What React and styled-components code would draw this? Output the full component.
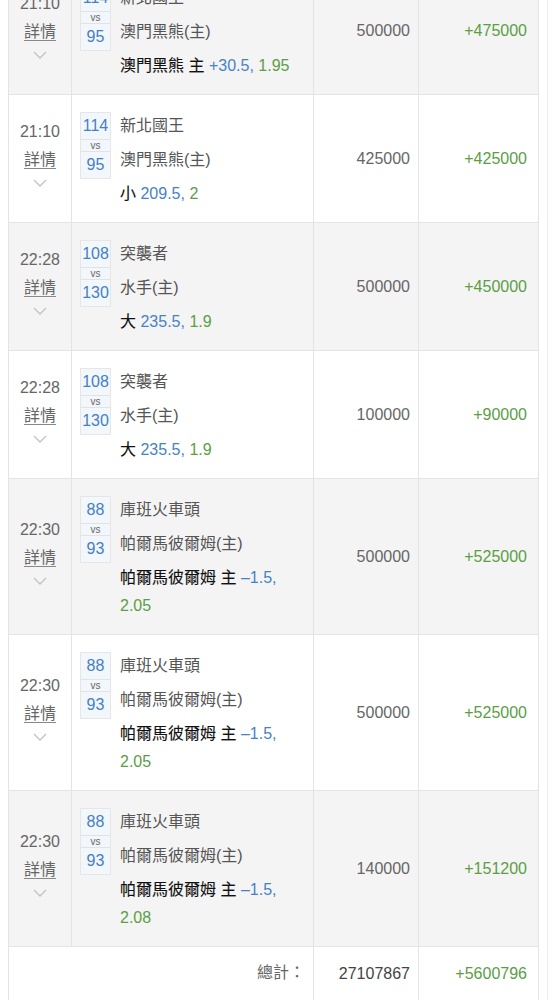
import React from "react";
import styled, { createGlobalStyle } from "styled-components";

const GlobalStyle = createGlobalStyle`
  html, body {
    margin: 0;
    padding: 0;
    background: #fff;
  }
  body {
    font-family: "Liberation Sans", Arial, "Noto Sans CJK TC", sans-serif;
    overflow: hidden;
  }
`;

const Page = styled.div`
  box-sizing: border-box;
  width: 548px;
  height: 100vh;
  padding-left: 8px;
  border-right: 1px solid #ececec;
  overflow: hidden;
`;

const Table = styled.table`
  width: 530px;
  margin-top: -34px;
  border-collapse: collapse;
  table-layout: fixed;
  font-size: 16px;
`;

const Row = styled.tr`
  background: ${(p) => (p.$shade ? "#f4f4f4" : "#ffffff")};
`;

const Cell = styled.td`
  border: 1px solid #e4e4e4;
  padding: 0;
  vertical-align: middle;
`;

const TimeCell = styled(Cell)`
  text-align: center;
`;

const TimeStack = styled.div`
  display: flex;
  flex-direction: column;
  align-items: center;
  padding-bottom: 8px;
`;

const Time = styled.div`
  line-height: 28px;
  color: #666;
`;

const Detail = styled.a`
  line-height: 28px;
  color: #666;
  text-decoration: underline;
  text-underline-offset: 3px;
  text-decoration-color: #888;
`;

const ChevronBox = styled.div`
  height: 18px;
  display: flex;
  align-items: center;
  justify-content: center;
`;

const MatchCell = styled(Cell)`
  padding: 14px 4px 14px 8px;
  vertical-align: top;
`;

const MatchBody = styled.div`
  display: flex;
  align-items: flex-start;
  gap: 9px;
`;

const ScoreBox = styled.div`
  box-sizing: border-box;
  flex: none;
  width: 31px;
  margin-top: 3px;
  border: 1px solid #e6e6e6;
  display: flex;
  flex-direction: column;
  text-align: center;
  background: #f2f7fc;
`;

const ScoreNum = styled.div`
  height: 26px;
  line-height: 26px;
  font-size: 16px;
  color: #4580c2;
`;

const Vs = styled.div`
  height: 11px;
  line-height: 11px;
  font-size: 10px;
  color: #666;
  border-top: 1px solid #e3e3e3;
  border-bottom: 1px solid #e3e3e3;
`;

const Info = styled.div`
  flex: 1;
  min-width: 0;
`;

const Team = styled.div`
  line-height: 34px;
  color: #555;
  white-space: nowrap;
`;

const Bet = styled.div`
  margin-top: 3px;
  line-height: 28px;
  color: #111;
`;

const Subject = styled.span`
  color: #111;
  -webkit-text-stroke: 0.12px #111;
`;

const Handicap = styled.span`
  color: #4683c4;
`;

const Odds = styled.span`
  color: #5b9e45;
`;

const AmountCell = styled(Cell)`
  text-align: right;
  padding-right: 8px;
  color: ${(p) => (p.$strong ? "#444" : "#666")};
`;

const ProfitCell = styled(Cell)`
  text-align: right;
  padding-right: 11px;
  color: #5b9e45;
`;

const TotalLabel = styled(Cell)`
  text-align: right;
  padding: 15px 8px 16px;
  line-height: 22px;
  color: #666;
`;

const Chevron = () => (
  <svg width="14" height="8" viewBox="0 0 14 8">
    <polyline
      points="1,1 7,7 13,1"
      fill="none"
      stroke="#c2c2c2"
      strokeWidth="1.3"
    />
  </svg>
);

const rows = [
  { time: "21:10", s1: "114", s2: "95", t1: "新北國王", t2: "澳門黑熊(主)", subject: "澳門黑熊 主", hand: "+30.5,", odds: "1.95", amount: "500000", profit: "+475000" },
  { time: "21:10", s1: "114", s2: "95", t1: "新北國王", t2: "澳門黑熊(主)", subject: "小", hand: "209.5,", odds: "2", amount: "425000", profit: "+425000" },
  { time: "22:28", s1: "108", s2: "130", t1: "突襲者", t2: "水手(主)", subject: "大", hand: "235.5,", odds: "1.9", amount: "500000", profit: "+450000" },
  { time: "22:28", s1: "108", s2: "130", t1: "突襲者", t2: "水手(主)", subject: "大", hand: "235.5,", odds: "1.9", amount: "100000", profit: "+90000" },
  { time: "22:30", s1: "88", s2: "93", t1: "庫班火車頭", t2: "帕爾馬彼爾姆(主)", subject: "帕爾馬彼爾姆 主", hand: "–1.5,", odds: "2.05", amount: "500000", profit: "+525000" },
  { time: "22:30", s1: "88", s2: "93", t1: "庫班火車頭", t2: "帕爾馬彼爾姆(主)", subject: "帕爾馬彼爾姆 主", hand: "–1.5,", odds: "2.05", amount: "500000", profit: "+525000" },
  { time: "22:30", s1: "88", s2: "93", t1: "庫班火車頭", t2: "帕爾馬彼爾姆(主)", subject: "帕爾馬彼爾姆 主", hand: "–1.5,", odds: "2.08", amount: "140000", profit: "+151200" },
];

export default function App() {
  return (
    <>
      <GlobalStyle />
      <Page>
        <Table>
          <colgroup>
            <col style={{ width: 63 }} />
            <col style={{ width: 242 }} />
            <col style={{ width: 105 }} />
            <col style={{ width: 120 }} />
          </colgroup>
          <tbody>
            {rows.map((r, i) => (
              <Row key={i} $shade={i % 2 === 0}>
                <TimeCell>
                  <TimeStack>
                    <Time>{r.time}</Time>
                    <Detail>詳情</Detail>
                    <ChevronBox>
                      <Chevron />
                    </ChevronBox>
                  </TimeStack>
                </TimeCell>
                <MatchCell>
                  <MatchBody>
                    <ScoreBox>
                      <ScoreNum>{r.s1}</ScoreNum>
                      <Vs>vs</Vs>
                      <ScoreNum>{r.s2}</ScoreNum>
                    </ScoreBox>
                    <Info>
                      <Team>{r.t1}</Team>
                      <Team>{r.t2}</Team>
                      <Bet>
                        <Subject>{r.subject}</Subject>{" "}
                        <Handicap>{r.hand}</Handicap> <Odds>{r.odds}</Odds>
                      </Bet>
                    </Info>
                  </MatchBody>
                </MatchCell>
                <AmountCell>{r.amount}</AmountCell>
                <ProfitCell>{r.profit}</ProfitCell>
              </Row>
            ))}
            <Row>
              <TotalLabel colSpan={2}>總計：</TotalLabel>
              <AmountCell $strong>27107867</AmountCell>
              <ProfitCell>+5600796</ProfitCell>
            </Row>
          </tbody>
        </Table>
      </Page>
    </>
  );
}
